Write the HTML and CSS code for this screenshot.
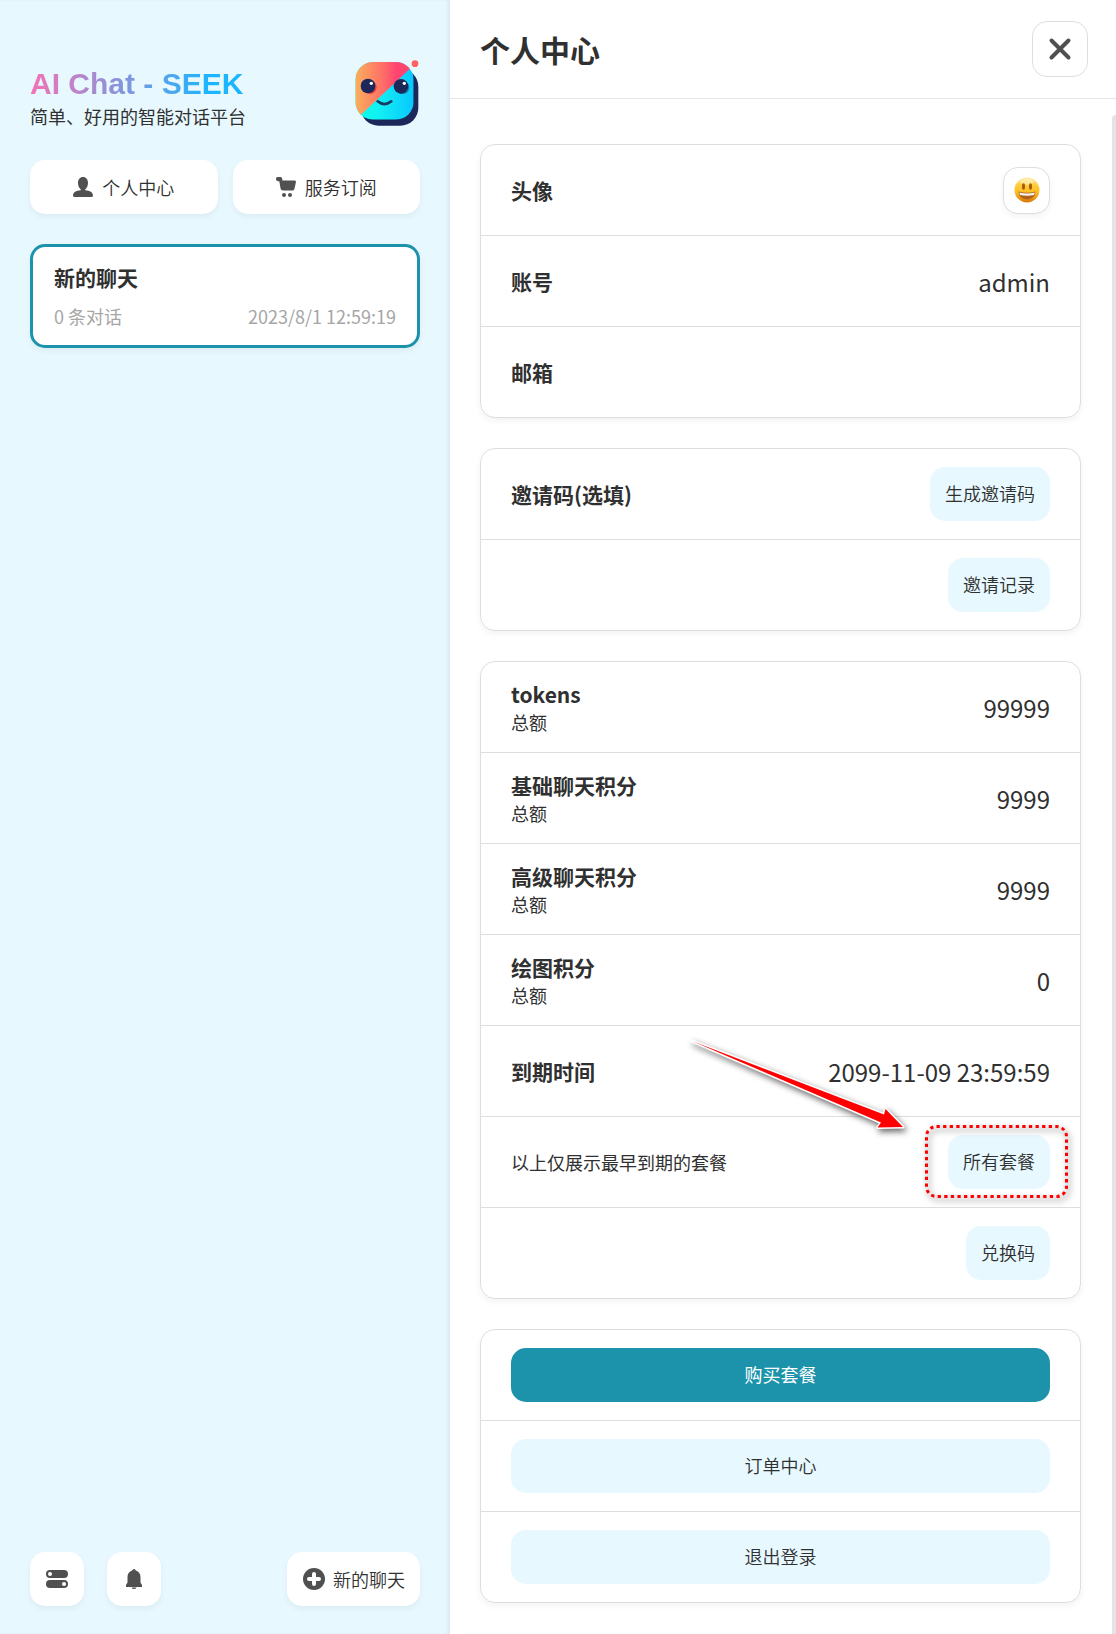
FILE: index.html
```html
<!DOCTYPE html>
<html lang="zh-CN">
<head>
    <meta charset="UTF-8">
    <meta name="viewport" content="width=device-width, initial-scale=1.0">
    <title>AI Chat - SEEK</title>
    <link rel="stylesheet" href="styles.css">
</head>
<body>
    <div class="container">
        <aside class="sidebar">
            <header class="sidebar-header">
                <div>
                    <h1 class="sidebar-title">AI Chat - SEEK</h1>
                    <p class="sidebar-subtitle">简单、好用的智能对话平台</p>
                </div>
                <svg class="logo" viewBox="36 24 204 216" aria-hidden="true">
                    <defs>
                        <linearGradient id="warm" x1="0" x2="1">
                            <stop offset="0" stop-color="#f9b05c"/>
                            <stop offset="0.5" stop-color="#ff6a68"/>
                            <stop offset="0.7" stop-color="#ff4470"/>
                            <stop offset="1" stop-color="#ff4470"/>
                        </linearGradient>
                        <linearGradient id="cool" x1="0" x2="1">
                            <stop offset="0" stop-color="#0cffe8"/>
                            <stop offset="0.4" stop-color="#12f0f2"/>
                            <stop offset="1" stop-color="#08c8ff"/>
                        </linearGradient>
                        <clipPath id="face"><rect x="46" y="36" width="175" height="173" rx="54"/></clipPath>
                    </defs>
                    <rect x="62" y="56" width="173" height="171" rx="54" fill="#1b2859"/>
                    <g clip-path="url(#face)">
                        <rect x="46" y="36" width="175" height="173" fill="url(#cool)"/>
                        <path d="M46 36H221V46L62 195L46 206Z" fill="url(#warm)"/>
                    </g>
                    <ellipse cx="90" cy="112" rx="20" ry="20" fill="#e8413c"/>
                    <ellipse cx="188" cy="113" rx="20" ry="19" fill="#1284ae"/>
                    <circle cx="84" cy="108" r="22" fill="#1b2859"/>
                    <circle cx="183" cy="109" r="22" fill="#1b2859"/>
                    <circle cx="94" cy="100" r="5" fill="#fff"/>
                    <circle cx="193" cy="100" r="5" fill="#fff"/>
                    <path d="M113 154Q133 171 154 154" fill="none" stroke="#163c66" stroke-width="8" stroke-linecap="round"/>
                    <circle cx="225" cy="41" r="10" fill="#ff6262"/>
                </svg>
            </header>

            <nav class="sidebar-nav">
                <button class="btn btn-white" type="button">
                    <svg class="icon-sm" viewBox="0 0 20 20" aria-hidden="true">
                        <path d="M10 0C13 0 15 2.500 15 6C15 9 13.700 11.300 12.200 12.400V13.300C17 13.500 20 15.500 20 18.500Q20 20 18.500 20H1.500Q0 20 0 18.500C0 15.500 3 13.500 7.800 13.300V12.400C6.300 11.300 5 9 5 6C5 2.500 7 0 10 0Z"/>
                    </svg>
                    <span>个人中心</span>
                </button>
                <button class="btn btn-white" type="button">
                    <svg class="icon-sm" viewBox="0 0 20 20" aria-hidden="true">
                        <path d="M1.500 0H4.500Q6 0 6.200 1.500L6.400 3.500H18.500Q20.200 3.500 19.900 5.200L18.400 12Q18 13.500 16.500 13.500H7Q5 13.500 4.600 11.700L3.300 4.200H2.200Q0 4.200 0 1.500Q0 0 1.500 0Z"/>
                        <circle cx="8" cy="18" r="2"/>
                        <circle cx="14" cy="18" r="2"/>
                    </svg>
                    <span>服务订阅</span>
                </button>
            </nav>

            <main class="chat-list">
                <a class="chat-item" href="#">
                    <span class="chat-title">新的聊天</span>
                    <span class="chat-info">
                        <span>0 条对话</span>
                        <span>2023/8/1 12:59:19</span>
                    </span>
                </a>
            </main>

            <footer class="sidebar-footer">
                <div class="sidebar-actions">
                    <button class="btn btn-white btn-square" type="button" aria-label="设置">
                        <svg class="icon" viewBox="0 0 24 24" aria-hidden="true">
                            <rect x="1" y="3" width="22" height="8" rx="4"/>
                            <rect x="1" y="13" width="22" height="8" rx="4"/>
                            <circle cx="5" cy="7" r="2" fill="#fff"/>
                            <circle cx="19" cy="17" r="2" fill="#fff"/>
                        </svg>
                    </button>
                    <button class="btn btn-white btn-square" type="button" aria-label="通知">
                        <svg class="icon" viewBox="0 0 24 24" aria-hidden="true">
                            <path d="M12 2Q13.500 2 13.800 3.600C17 4.500 18.500 7 18.500 10V15.500L20 18V20H4V18L5.500 15.500V10C5.500 7 7 4.500 10.200 3.600Q10.500 2 12 2Z"/>
                            <path d="M9.500 20.400H14.500Q14 22 12 22Q10 22 9.500 20.400Z"/>
                        </svg>
                    </button>
                </div>
                <button class="btn btn-white btn-new" type="button">
                    <svg class="icon" viewBox="0 0 24 24" aria-hidden="true">
                        <circle cx="12" cy="12" r="11"/>
                        <path d="M12 7V17M7 12H17" stroke="#fff" stroke-width="4" stroke-linecap="round"/>
                    </svg>
                    <span>新的聊天</span>
                </button>
            </footer>
        </aside>

        <section class="window">
            <header class="window-header">
                <h2 class="window-title">个人中心</h2>
                <button class="close-btn" type="button" aria-label="关闭">
                    <svg class="icon" viewBox="0 0 24 24" aria-hidden="true">
                        <path d="M3.500 3.500L20.500 20.500M20.500 3.500L3.500 20.500" stroke="#505050" stroke-width="4" stroke-linecap="round"/>
                    </svg>
                </button>
            </header>

            <div class="window-body">
                <div class="settings">
                    <ul class="list">
                        <li class="list-item">
                            <h3 class="list-title">头像</h3>
                            <button class="avatar" type="button" aria-label="头像">
                                <svg class="icon-emoji" viewBox="0 0 26 26" aria-hidden="true">
                                    <defs>
                                        <linearGradient id="emoji" x1="0" y1="0" x2="0" y2="1">
                                            <stop offset="0" stop-color="#ffe9a0"/>
                                            <stop offset="0.3" stop-color="#ffcd3c"/>
                                            <stop offset="0.6" stop-color="#fdbc20"/>
                                            <stop offset="1" stop-color="#d87908"/>
                                        </linearGradient>
                                    </defs>
                                    <circle cx="13" cy="13" r="12.500" fill="url(#emoji)"/>
                                    <ellipse cx="13" cy="4.500" rx="7" ry="3.200" fill="#fff3c4" opacity="0.6"/>
                                    <ellipse cx="9.500" cy="9.500" rx="1.500" ry="3.300" fill="#a85a0c"/>
                                    <ellipse cx="16.500" cy="9.500" rx="1.500" ry="3.300" fill="#a85a0c"/>
                                    <path d="M4.500 14.500Q13 17 21.500 14.500Q21 22 13 22.500Q5 22 4.500 14.500Z" fill="#b0611a"/>
                                    <path d="M5.200 15.400Q13 17.600 20.800 15.400L20 18Q13 19.500 6 18Z" fill="#f4f4f4"/>
                                </svg>
                            </button>
                        </li>
                        <li class="list-item">
                            <h3 class="list-title">账号</h3>
                            <span class="list-value">admin</span>
                        </li>
                        <li class="list-item">
                            <h3 class="list-title">邮箱</h3>
                        </li>
                    </ul>

                    <ul class="list">
                        <li class="list-item">
                            <h3 class="list-title">邀请码(选填)</h3>
                            <button class="btn btn-light" type="button">生成邀请码</button>
                        </li>
                        <li class="list-item list-item-end">
                            <button class="btn btn-light" type="button">邀请记录</button>
                        </li>
                    </ul>

                    <ul class="list">
                        <li class="list-item">
                            <div>
                                <h3 class="list-title">tokens</h3>
                                <p class="list-sub">总额</p>
                            </div>
                            <span class="list-value">99999</span>
                        </li>
                        <li class="list-item">
                            <div>
                                <h3 class="list-title">基础聊天积分</h3>
                                <p class="list-sub">总额</p>
                            </div>
                            <span class="list-value">9999</span>
                        </li>
                        <li class="list-item">
                            <div>
                                <h3 class="list-title">高级聊天积分</h3>
                                <p class="list-sub">总额</p>
                            </div>
                            <span class="list-value">9999</span>
                        </li>
                        <li class="list-item">
                            <div>
                                <h3 class="list-title">绘图积分</h3>
                                <p class="list-sub">总额</p>
                            </div>
                            <span class="list-value">0</span>
                        </li>
                        <li class="list-item">
                            <h3 class="list-title">到期时间</h3>
                            <span class="list-value">2099-11-09 23:59:59</span>
                        </li>
                        <li class="list-item">
                            <p class="list-sub">以上仅展示最早到期的套餐</p>
                            <div class="highlight">
                                <button class="btn btn-light" type="button">所有套餐</button>
                                <svg class="highlight-box" viewBox="0 0 143 73" aria-hidden="true">
                                    <rect x="1.500" y="1.500" width="140" height="70" rx="10" fill="none" stroke="#f00" stroke-width="3" stroke-dasharray="3.300 3.300"/>
                                </svg>
                                <svg class="highlight-arrow" viewBox="0 0 240 110" aria-hidden="true">
                                    <path d="M12 11L204 84.500L205.500 79L223 97L197.500 97.500L201 92.500Z" fill="#f00" stroke="#fff" stroke-width="3" stroke-linejoin="round" paint-order="stroke"/>
                                </svg>
                            </div>
                        </li>
                        <li class="list-item list-item-end">
                            <button class="btn btn-light" type="button">兑换码</button>
                        </li>
                    </ul>

                    <ul class="list">
                        <li class="list-item">
                            <button class="btn btn-primary btn-block" type="button">购买套餐</button>
                        </li>
                        <li class="list-item">
                            <button class="btn btn-light btn-block" type="button">订单中心</button>
                        </li>
                        <li class="list-item">
                            <button class="btn btn-light btn-block" type="button">退出登录</button>
                        </li>
                    </ul>
                </div>
                <div class="scrollbar"></div>
            </div>
        </section>
    </div>
</body>
</html>
```
FILE: styles.css
```css
:root {
    --primary: #1d93ab;
    --second: #e7f8ff;
    --white: #ffffff;
    --black: #303030;
    --icon: #505050;
    --border: #dedede;
    --card-shadow: 0 3px 6px rgba(0, 0, 0, 0.05);
}

* {
    margin: 0;
    padding: 0;
    box-sizing: border-box;
}

body {
    font-family: "Noto Sans CJK SC", sans-serif;
    font-size: 18px;
    color: var(--black);
    background-color: var(--white);
}

button {
    font: inherit;
    color: inherit;
    border: none;
    cursor: pointer;
}

.container {
    display: flex;
    min-height: 100vh;
}

/* sidebar */
.sidebar {
    display: flex;
    flex-direction: column;
    flex: 0 0 450px;
    padding: 58px 30px 28px;
    background-color: var(--second);
    box-shadow: inset -3px 0 3px rgba(0, 0, 0, 0.05);
}

.sidebar-header {
    display: flex;
    justify-content: space-between;
    margin-bottom: 30px;
}

.sidebar-title {
    width: fit-content;
    padding-top: 8px;
    font-family: "Liberation Sans", Arial, sans-serif;
    font-size: 30px;
    line-height: 36px;
    background: linear-gradient(90deg, #f472b6, #1ab6ff 85%);
    -webkit-background-clip: text;
    background-clip: text;
    color: transparent;
}

.sidebar-subtitle {
    line-height: 28px;
}

.logo {
    width: 68px;
    height: 72px;
}

.sidebar-nav {
    display: flex;
    gap: 15px;
    margin-bottom: 30px;
}

.sidebar-nav .btn {
    flex: 1;
}

.chat-list {
    flex: 1;
}

.chat-item {
    display: flex;
    flex-direction: column;
    gap: 12px;
    padding: 15px 21px 16px;
    color: inherit;
    text-decoration: none;
    background-color: var(--white);
    border: 3px solid var(--primary);
    border-radius: 15px;
    box-shadow: var(--card-shadow);
}

.chat-title {
    font-size: 21px;
    font-weight: 700;
    line-height: 30px;
}

.chat-info {
    display: flex;
    justify-content: space-between;
    color: #a6a6a6;
    line-height: 25px;
}

.sidebar-footer,
.sidebar-actions {
    display: flex;
    justify-content: space-between;
}

.sidebar-actions {
    gap: 23px;
}

/* buttons */
.btn {
    display: flex;
    align-items: center;
    justify-content: center;
    gap: 9px;
    height: 54px;
    padding: 0 15px;
    font-weight: 350;
    border-radius: 15px;
}

.btn-white {
    background-color: var(--white);
    box-shadow: var(--card-shadow);
}

.btn-light,
.btn-primary {
    padding-bottom: 2px;
}

.btn-light {
    background-color: var(--second);
}

.btn-primary {
    font-weight: 400;
    color: var(--white);
    background-color: var(--primary);
}

.btn-square {
    width: 54px;
}

.btn-new {
    gap: 7px;
}

.btn-block {
    width: 100%;
}

.icon {
    width: 24px;
    height: 24px;
    fill: var(--icon);
}

.icon-sm {
    width: 20px;
    height: 20px;
    fill: var(--icon);
}

.icon-emoji {
    width: 26px;
    height: 26px;
}

/* window */
.window {
    display: flex;
    flex-direction: column;
    flex: 1;
    min-width: 0;
}

.window-header {
    display: flex;
    align-items: center;
    justify-content: space-between;
    padding: 21px 28px 21px 30px;
    border-bottom: 1px solid #e5e5e5;
}

.window-title {
    font-size: 30px;
    font-weight: 700;
    line-height: 45px;
}

.close-btn {
    display: flex;
    align-items: center;
    justify-content: center;
    width: 56px;
    height: 56px;
    background-color: var(--white);
    border: 1px solid var(--border);
    border-radius: 15px;
}

.window-body {
    display: flex;
    flex: 1;
}

.scrollbar {
    width: 4px;
    margin-top: 16px;
    background-color: #e4e4e4;
    border-radius: 4px 0 0 0;
}

.settings {
    display: flex;
    flex-direction: column;
    flex: 1;
    gap: 30px;
    padding: 45px 31px 30px 30px;
}

.list {
    list-style: none;
    border: 1px solid var(--border);
    border-radius: 15px;
    box-shadow: var(--card-shadow);
}

.list-item {
    display: flex;
    align-items: center;
    justify-content: space-between;
    min-height: 90px;
    padding: 0 30px;
}

.list-item + .list-item {
    min-height: 91px;
    border-top: 1px solid var(--border);
}

.list-item-end {
    justify-content: flex-end;
}

.list-title {
    font-size: 21px;
    font-weight: 700;
    line-height: 30px;
}

.list-sub {
    line-height: 27px;
}

.list-value {
    padding-top: 2px;
    font-size: 24px;
    line-height: 36px;
}

.avatar {
    display: flex;
    align-items: center;
    justify-content: center;
    width: 47px;
    height: 47px;
    background-color: var(--white);
    border: 1px solid var(--border);
    border-radius: 15px;
    box-shadow: var(--card-shadow);
}

/* marker around the plans button */
.highlight {
    position: relative;
}

.highlight-box,
.highlight-arrow {
    position: absolute;
    pointer-events: none;
    overflow: visible;
    filter: drop-shadow(2px 3px 3px rgba(0, 0, 0, 0.6));
}

.highlight-box {
    top: -10px;
    left: -23px;
    width: 143px;
    height: 73px;
}

.highlight-arrow {
    top: -105px;
    left: -268px;
    width: 240px;
    height: 110px;
}
```
